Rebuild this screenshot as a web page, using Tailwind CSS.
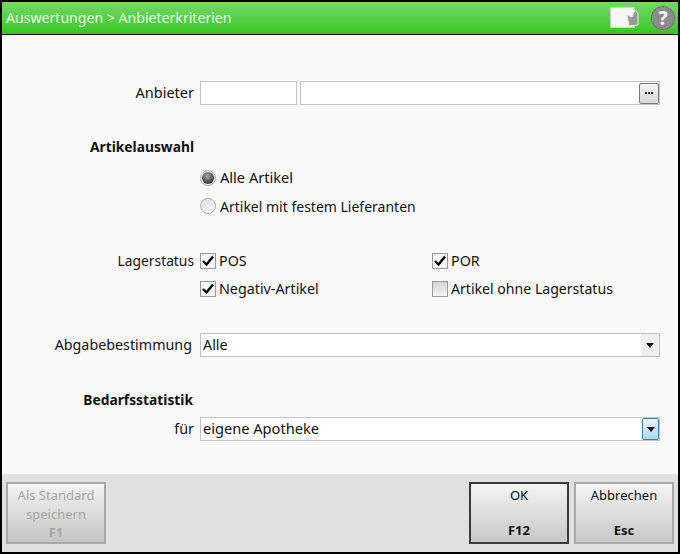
<!DOCTYPE html>
<html lang="de">
<head>
  <meta charset="UTF-8" />
  <title>Anbieterkriterien</title>
  <script src="https://cdn.jsdelivr.net/npm/@tailwindcss/browser@4"></script>
</head>
<body class="bg-black">
  <div class="w-[680px] h-[554px] border-2 border-black flex flex-col bg-[#f9f9f9] font-['Noto_Sans',sans-serif] text-[14.3px] text-[#111] overflow-hidden">

    <!-- title bar -->
    <header class="h-[33px] shrink-0 flex items-center pl-[4px] pr-[3px] border-b border-black bg-gradient-to-b from-[#74d965] to-[#2fc81a]">
      <span class="text-[14.1px] text-[#eefde8] flex-1">Auswertungen &gt; Anbieterkriterien</span>
      <svg width="30" height="22" viewBox="0 0 30 22" class="mr-[12px]">
        <rect x="1.5" y="0.5" width="24" height="20" fill="#f6f6f6" stroke="#cfcfcf" />
        <path d="M18 8 L20 19 L29 18 L29 6 L26 3 L23 10 Z" fill="#9a9a9a" stroke="#e8e8e8" />
      </svg>
      <div class="w-[24px] h-[24px] rounded-full bg-[#8c8c8c] border border-dotted border-[#555] flex items-center justify-center text-white font-bold text-[19px] leading-none">?</div>
    </header>

    <!-- form -->
    <main class="flex-1 flex flex-col">
      <div class="flex items-center mt-[46px] h-[24px]">
        <label class="w-[198px] pr-[6px] text-right text-[14.5px]">Anbieter</label>
        <div class="w-[97px] h-[24px] bg-white border border-[#c4c4c4]"></div>
        <div class="ml-[3px] w-[360px] h-[24px] bg-white border border-[#c4c4c4] flex justify-end items-center">
          <button class="w-[20px] h-[21px] rounded-[2px] border border-[#7a7a7a] bg-gradient-to-b from-[#f5f5f5] to-[#d8d8d8] flex items-center justify-center">
            <svg width="8" height="2" viewBox="0 0 8 2"><path d="M0 0 H2 V2 H0 Z M3 0 H5 V2 H3 Z M6 0 H8 V2 H6 Z" fill="#1a2a44" /></svg>
          </button>
        </div>
      </div>

      <div class="mt-[30px] h-[24px] w-[198px] pr-[6px] text-right font-bold text-[13.8px] leading-[24px]">Artikelauswahl</div>

      <div class="mt-[5px] ml-[198px] flex flex-col">
        <div class="flex items-center h-[28px] gap-[4px]">
          <span class="w-[16px] h-[16px] rounded-full border border-[#b0b0b0] bg-[#f0f0f0] flex items-center justify-center">
            <span class="w-[12px] h-[12px] rounded-full bg-[radial-gradient(circle_at_45%_35%,#a8a8a8,#3a3a3a_70%,#555_100%)]"></span>
          </span>
          <span class="text-[14.6px]">Alle Artikel</span>
        </div>
        <div class="flex items-center h-[28px] gap-[4px]">
          <span class="w-[16px] h-[16px] rounded-full border border-[#b0b0b0] bg-gradient-to-br from-[#dcdcdc] to-[#fcfcfc]"></span>
          <span class="text-[14px]">Artikel mit festem Lieferanten</span>
        </div>
      </div>

      <div class="mt-[27px] flex">
        <label class="w-[198px] pr-[6px] text-right h-[28px] leading-[16px] pt-[6px] text-[13.8px]">Lagerstatus</label>
        <div class="grid grid-cols-[232px_auto] auto-rows-[28px]">
          <div class="flex items-start gap-[3px] pt-[6px]">
            <svg width="16" height="16" viewBox="0 0 16 16"><rect x="0.5" y="0.5" width="15" height="15" fill="#f6f6f6" stroke="#9a9a9a" /><path d="M3 8 L6.5 11.5 L13 3.5" fill="none" stroke="#000" stroke-width="2.4" /></svg>
            <span class="leading-[16px]">POS</span>
          </div>
          <div class="flex items-start gap-[3px] pt-[6px]">
            <svg width="16" height="16" viewBox="0 0 16 16"><rect x="0.5" y="0.5" width="15" height="15" fill="#f6f6f6" stroke="#9a9a9a" /><path d="M3 8 L6.5 11.5 L13 3.5" fill="none" stroke="#000" stroke-width="2.4" /></svg>
            <span class="leading-[16px]">POR</span>
          </div>
          <div class="flex items-start gap-[3px] pt-[6px]">
            <svg width="16" height="16" viewBox="0 0 16 16"><rect x="0.5" y="0.5" width="15" height="15" fill="#f6f6f6" stroke="#9a9a9a" /><path d="M3 8 L6.5 11.5 L13 3.5" fill="none" stroke="#000" stroke-width="2.4" /></svg>
            <span class="leading-[16px]">Negativ-Artikel</span>
          </div>
          <div class="flex items-start gap-[3px] pt-[6px]">
            <span class="w-[16px] h-[16px] border border-[#9a9a9a] bg-gradient-to-b from-[#d6d6d6] to-[#f4f4f4]"></span>
            <span class="leading-[16px] text-[14.1px]">Artikel ohne Lagerstatus</span>
          </div>
        </div>
      </div>

      <div class="flex items-center mt-[30px] h-[24px]">
        <label class="w-[198px] pr-[8px] text-right whitespace-nowrap">Abgabebestimmung</label>
        <div class="w-[460px] h-[24px] bg-white border border-[#c4c4c4] flex items-center justify-between pl-[2px]">
          <span>Alle</span>
          <span class="w-[18px] h-[22px] bg-[#efefef] flex items-center justify-center">
            <svg width="8" height="5" viewBox="0 0 8 5"><path d="M0 0 H8 L4 5 Z" fill="#111" /></svg>
          </span>
        </div>
      </div>

      <div class="mt-[31px] h-[24px] w-[198px] pr-[7px] text-right font-bold text-[13.8px] leading-[24px]">Bedarfsstatistik</div>

      <div class="flex items-center mt-[5px] h-[24px]">
        <label class="w-[198px] pr-[6px] text-right">für</label>
        <div class="w-[460px] h-[24px] bg-white border border-[#c4c4c4] flex items-center justify-between pl-[2px]">
          <span class="text-[14.6px]">eigene Apotheke</span>
          <span class="w-[17px] h-[22px] rounded-[2px] border border-[#3f7fa8] bg-gradient-to-b from-[#eaf6fd] to-[#a9daf5] flex items-center justify-center">
            <svg width="8" height="5" viewBox="0 0 8 5"><path d="M0 0 H8 L4 5 Z" fill="#111" /></svg>
          </span>
        </div>
      </div>
    </main>

    <!-- buttons -->
    <footer class="h-[78px] shrink-0 bg-[#e0e0e0] flex items-start pt-[8px] pl-[4px] pr-[4px] gap-[5px] text-[13px]">
      <button class="w-[100px] h-[62px] border-2 border-[#a8a8a8] bg-gradient-to-b from-[#f4f4f4] to-[#c4c4c4] text-[#a6a6a6] flex flex-col items-center leading-[18.5px] pt-[2px] mr-auto">
        <span>Als Standard</span>
        <span>speichern</span>
        <span class="font-bold">F1</span>
      </button>
      <button class="w-[100px] h-[62px] border-2 border-[#3a3a3a] bg-gradient-to-b from-[#f4f4f4] to-[#c8c8c8] flex flex-col items-center justify-between leading-[19px] pt-[2px] pb-[2px]">
        <span>OK</span>
        <span class="font-bold">F12</span>
      </button>
      <button class="w-[100px] h-[62px] border-2 border-[#a8a8a8] bg-gradient-to-b from-[#f4f4f4] to-[#c8c8c8] flex flex-col items-center justify-between leading-[19px] pt-[2px] pb-[2px]">
        <span>Abbrechen</span>
        <span class="font-bold">Esc</span>
      </button>
    </footer>
  </div>
</body>
</html>
